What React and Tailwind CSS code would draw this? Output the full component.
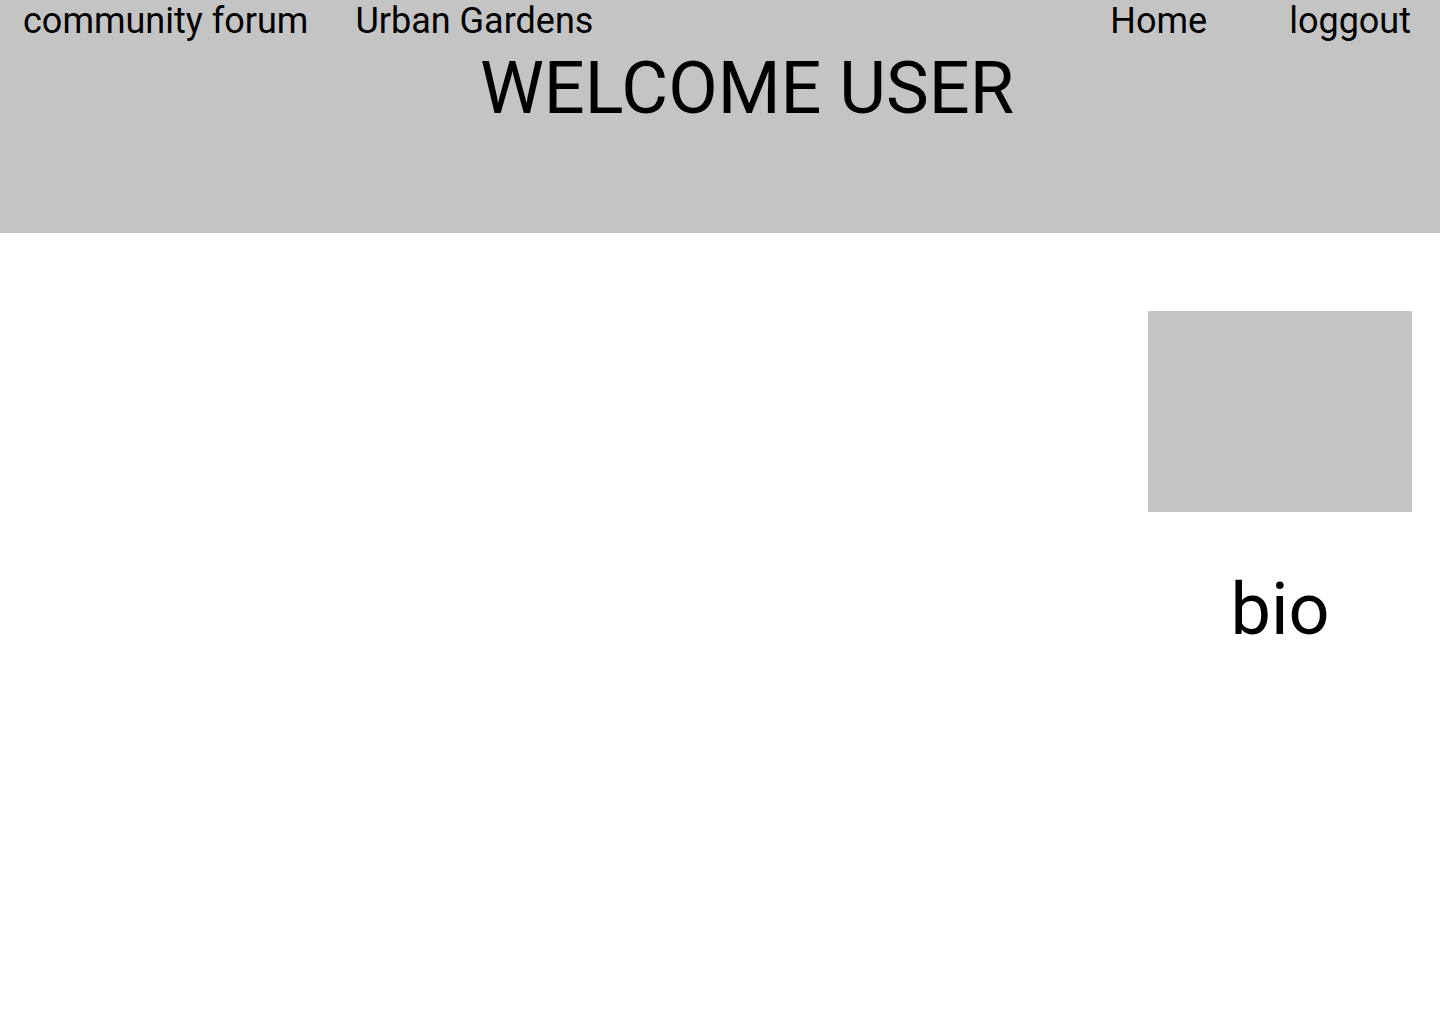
export default function App() {
  return (
    <div className="min-h-screen bg-white text-black" style={{ fontFamily: 'Roboto, "Liberation Sans", sans-serif' }}>
      {/* header */}
      <header className="h-[233px] bg-[#c4c4c4]">
        <nav className="flex items-start pl-[23px] pr-[29px] text-[36px] leading-[42px]">
          <a className="block">community forum</a>
          <a className="ml-[47px] block">Urban Gardens</a>
          <a className="ml-auto block">Home</a>
          <a className="ml-[82px] block">loggout</a>
        </nav>
        <h1 className="mt-[5px] flex justify-center pl-[54px] text-[72px] leading-[84px]">WELCOME USER</h1>
      </header>

      {/* profile */}
      <main className="flex justify-end pr-[28px] pt-[78px]">
        <aside className="flex w-[264px] flex-col items-center">
          <div className="h-[201px] w-[264px] bg-[#c4c4c4]" />
          <p className="mt-[56px] text-[72px] leading-[84px]">bio</p>
        </aside>
      </main>
    </div>
  );
}
